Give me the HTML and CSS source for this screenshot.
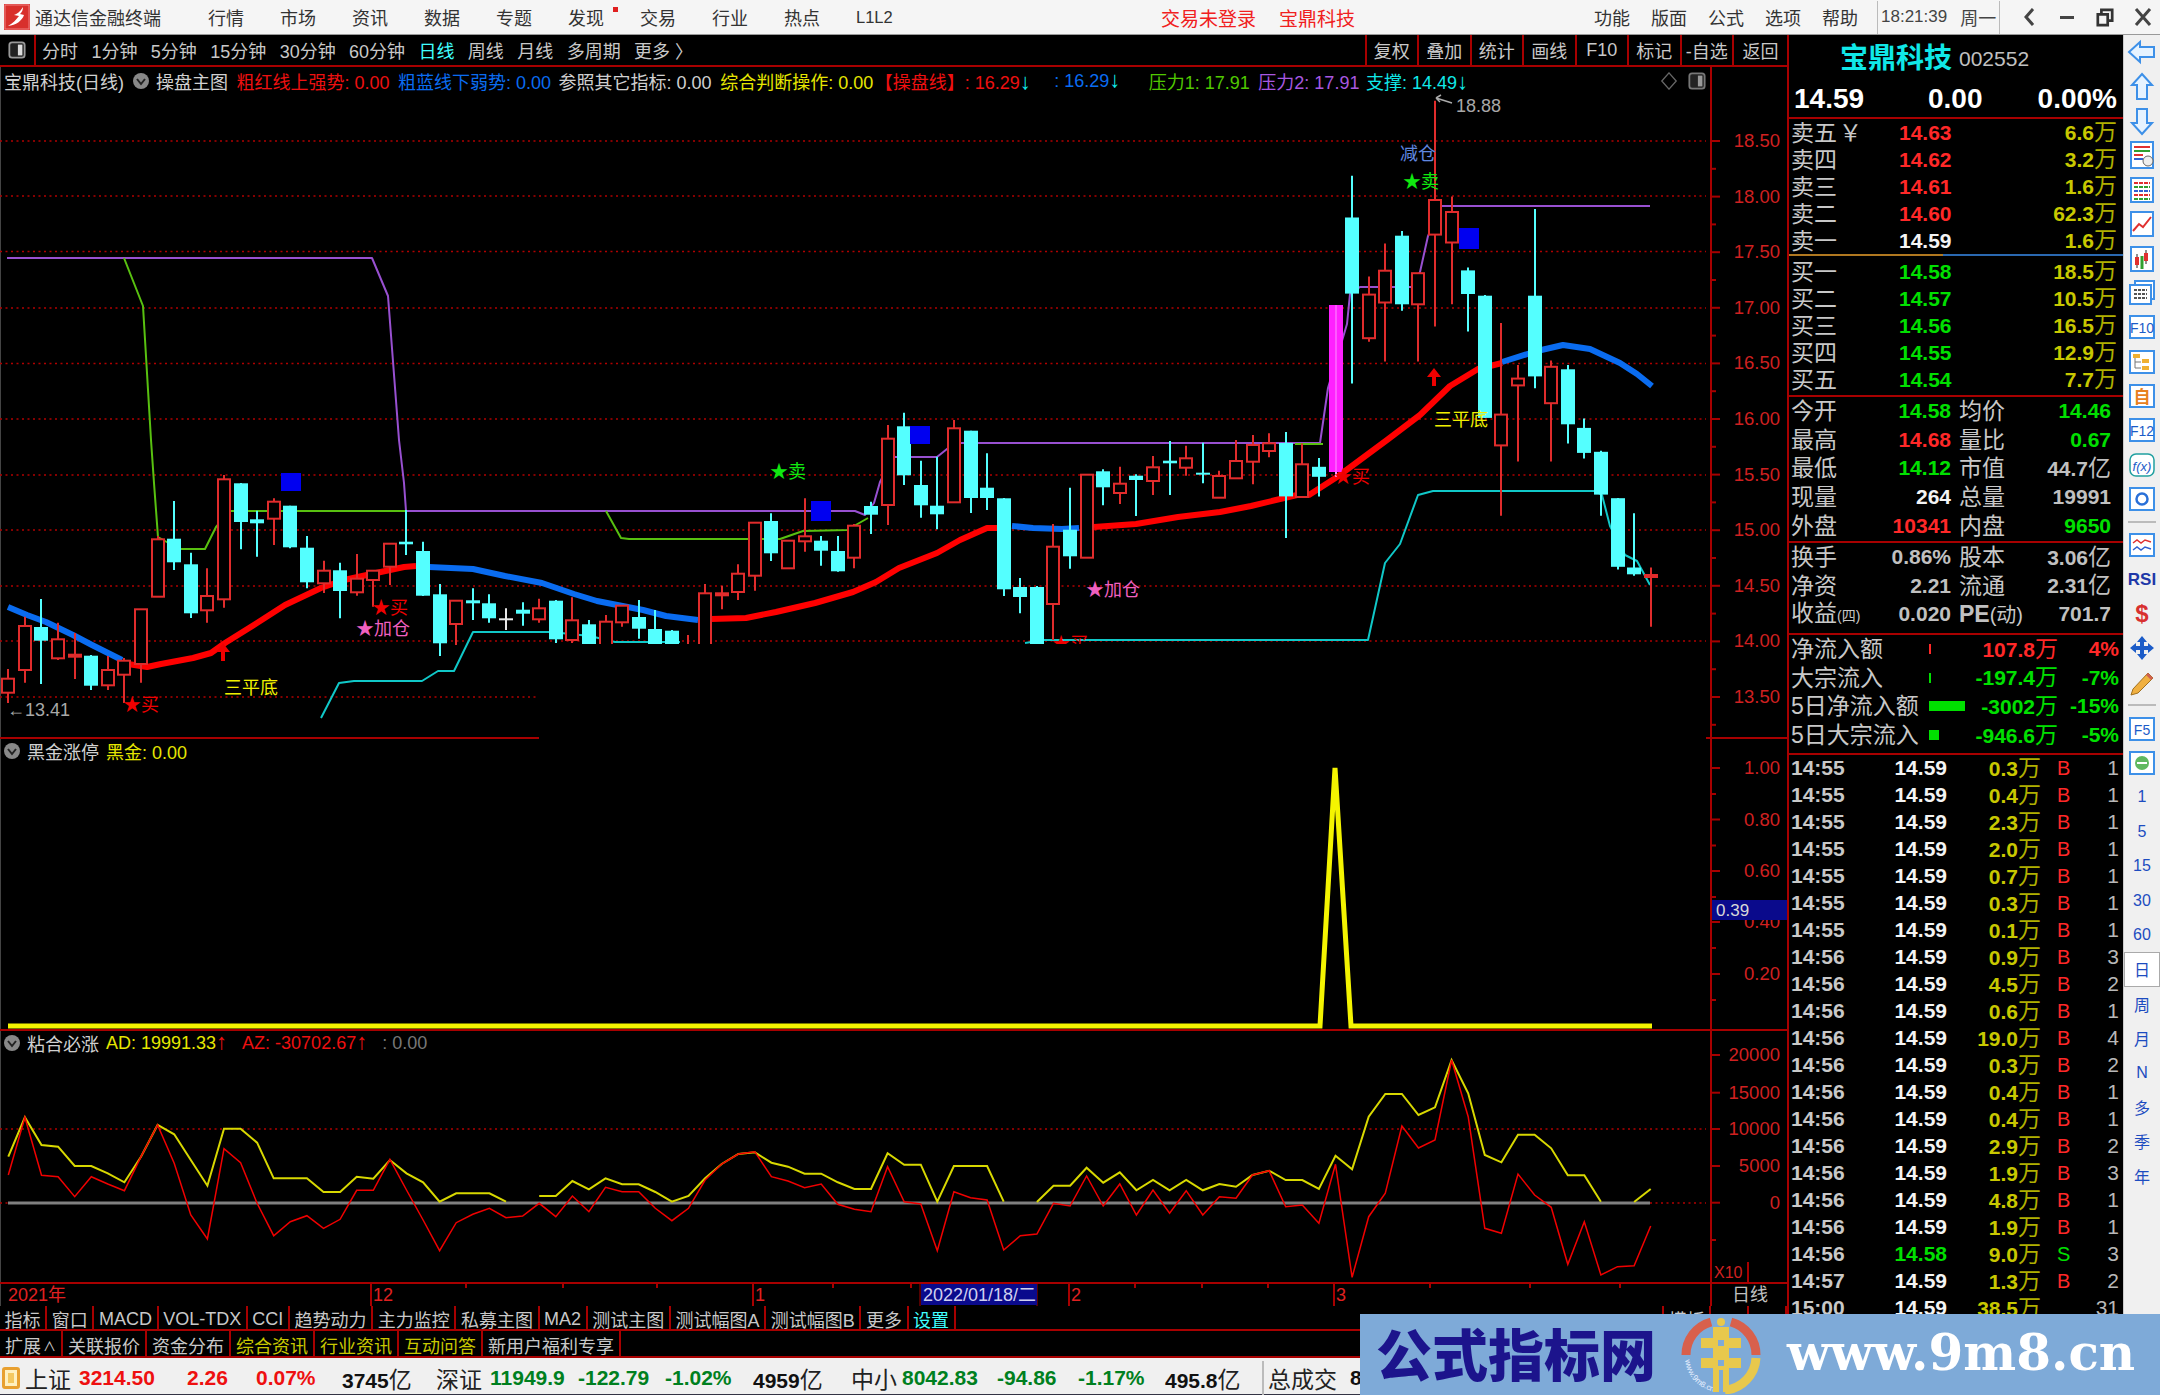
FILE: index.html
```html
<!DOCTYPE html>
<html lang="zh-CN">
<head>
    <meta charset="UTF-8">
    <title>通达信金融终端</title>
    <link rel="stylesheet" href="styles.css">
</head>
<body>

    <!-- Menu bar -->
    <header class="menubar">
        <div class="brand">
            <svg class="brand-logo" viewBox="0 0 26 26">
                <rect width="26" height="26" fill="#d8302c"/>
                <rect x="1" y="1" width="24" height="24" fill="none" stroke="#f08080"/>
                <path d="M19 3 C16 8 13 10 10 11 L15 12 C12 16 9 19 4 22 C12 21 18 17 20 11 L16 10 C18 8 19 6 19 3 Z" fill="#fff"/>
            </svg>
            <span>通达信金融终端</span>
        </div>
        <nav class="nav">
            <span>行情</span><span>市场</span><span>资讯</span><span>数据</span><span>专题</span>
            <span class="has-dot">发现</span><span>交易</span><span>行业</span><span>热点</span><span>L1L2</span>
        </nav>
        <span class="login">交易未登录</span>
        <span class="login login-stock">宝鼎科技</span>
        <nav class="nav-right">
            <span>功能</span><span>版面</span><span>公式</span><span>选项</span><span>帮助</span>
        </nav>
        <div class="clock"><span>18:21:39</span><span class="clock-day">周一</span></div>
        <div class="win-buttons">
            <svg viewBox="0 0 16 22"><path d="M12 3 L5 11 L12 19" fill="none" stroke="#444" stroke-width="3"/></svg>
            <svg viewBox="0 0 16 22"><rect x="1" y="10" width="14" height="3" fill="#444"/></svg>
            <svg viewBox="0 0 20 22"><path d="M2 8 H13 V20 H2 Z M6 8 V3 H18 V15 H13" fill="none" stroke="#333" stroke-width="3"/></svg>
            <svg viewBox="0 0 18 22"><path d="M2 3 L16 19 M16 3 L2 19" fill="none" stroke="#444" stroke-width="3"/></svg>
        </div>
    </header>

    <div class="workspace">

        <!-- Chart column -->
        <main class="chart-col">
            <div class="toolbar">
                <div class="toolbar-icon">
                    <svg viewBox="0 0 20 20"><rect x="1.5" y="1.5" width="17" height="17" rx="3" fill="#222" stroke="#999" stroke-width="2"/><rect x="11" y="4" width="5" height="12" fill="#ddd"/></svg>
                </div>
                <div class="periods">
                    <span>分时</span><span>1分钟</span><span>5分钟</span><span>15分钟</span><span>30分钟</span><span>60分钟</span>
                    <span class="active">日线</span><span>周线</span><span>月线</span><span>多周期</span><span>更多 〉</span>
                </div>
                <div class="tool-cells">
                    <span>复权</span><span>叠加</span><span>统计</span><span>画线</span><span>F10</span><span>标记</span><span>-自选</span><span class="last">返回</span>
                </div>
            </div>

            <div class="charts">
                <svg id="chart" class="chart-svg" viewBox="0 67 1787 1239">
                    <g id="chart-shapes"></g>
                    <!-- chart marks -->
                    <g class="marks">
                        <text class="mk-gray" x="1456" y="112">18.88</text>
                        <path d="M1452 103 L1436 98 M1436 98 L1441 95 M1436 98 L1440 102" stroke="#aaa" fill="none" stroke-width="1.5"/>
                        <text class="mk-gray" x="7" y="716">←13.41</text>
                        <text class="mk-blue" x="1400" y="160">减仓</text>
                        <text class="mk-green" x="1403" y="188">★卖</text>
                        <text class="mk-green" x="770" y="478">★卖</text>
                        <text class="mk-red" x="123" y="711">★买</text>
                        <text class="mk-red" x="372" y="614">★买</text>
                        <text class="mk-red" x="1334" y="483">★买</text>
                        <text class="mk-red" x="1052" y="650">★买</text>
                        <text class="mk-pink" x="356" y="635">★加仓</text>
                        <text class="mk-pink" x="1086" y="596">★加仓</text>
                        <text class="mk-yellow" x="224" y="694">三平底</text>
                        <text class="mk-yellow" x="1434" y="426">三平底</text>
                    </g>
                    <rect x="1050" y="644" width="44" height="14" fill="#000"/>
                    <!-- date axis -->
                    <g class="dates">
                        <rect x="921" y="1284" width="116" height="21" fill="#0a0a8c"/>
                        <text class="date-text" x="8" y="1301">2021年</text>
                        <text class="date-text" x="373" y="1301">12</text>
                        <text class="date-text" x="755" y="1301">1</text>
                        <text class="date-now" x="923" y="1301">2022/01/18/二</text>
                        <text class="date-text" x="1071" y="1301">2</text>
                        <text class="date-text" x="1336" y="1301">3</text>
                        <text class="date-unit" x="1732" y="1301">日线</text>
                    </g>
                </svg>
                <section class="pane pane-main">
                    <div class="pane-head">
                        <span class="c-white">宝鼎科技(日线)</span>
                        <svg class="chevron" viewBox="0 0 16 16"><circle cx="8" cy="8" r="8" fill="#888"/><path d="M4 6 L8 11 L12 6" fill="none" stroke="#222" stroke-width="2"/></svg>
                        <span class="c-white head-name">操盘主图</span>
                        <span class="c-red">粗红线上强势: 0.00</span>
                        <span class="c-blue">粗蓝线下弱势: 0.00</span>
                        <span class="c-white head-refer">参照其它指标: 0.00</span>
                        <span class="c-yellow">综合判断操作: 0.00</span>
                        <span class="c-red head-line">【操盘线】: 16.29<b class="c-cyan">↓</b></span>
                        <span class="c-blue head-colon">: 16.29<b class="c-cyan">↓</b></span>
                        <span class="c-lime head-press">压力1: 17.91</span>
                        <span class="c-purple">压力2: 17.91</span>
                        <span class="c-cyan head-support">支撑: 14.49<b>↓</b></span>
                        <span class="head-icons">
                            <svg viewBox="0 0 18 20"><path d="M9 1 L17 10 L9 19 L1 10 Z" fill="none" stroke="#666" stroke-width="1.5"/></svg>
                            <svg viewBox="0 0 20 20"><rect x="1.5" y="1.5" width="17" height="17" rx="3" fill="#222" stroke="#777" stroke-width="2"/><rect x="11" y="4" width="5" height="12" fill="#999"/></svg>
                        </span>
                    </div>
                </section>
                <section class="pane pane-gold">
                    <div class="pane-head">
                        <svg class="chevron" viewBox="0 0 16 16"><circle cx="8" cy="8" r="8" fill="#888"/><path d="M4 6 L8 11 L12 6" fill="none" stroke="#222" stroke-width="2"/></svg>
                        <span class="c-white">黑金涨停</span>
                        <span class="c-yellow">黑金: 0.00</span>
                    </div>
                </section>
                <section class="pane pane-stick">
                    <div class="pane-head">
                        <svg class="chevron" viewBox="0 0 16 16"><circle cx="8" cy="8" r="8" fill="#888"/><path d="M4 6 L8 11 L12 6" fill="none" stroke="#222" stroke-width="2"/></svg>
                        <span class="c-white">粘合必涨</span>
                        <span class="c-yellow">AD: 19991.33<b class="c-red">↑</b></span>
                        <span class="c-red head-az">AZ: -30702.67<b>↑</b></span>
                        <span class="c-gray head-az">: 0.00</span>
                    </div>
                </section>
            </div>

            <!-- Indicator tabs -->
            <div class="tabs tabs-top">
                <span>指标</span><span>窗口</span><span>MACD</span><span>VOL-TDX</span><span>CCI</span><span>趋势动力</span><span>主力监控</span><span>私募主图</span><span>MA2</span><span>测试主图</span><span>测试幅图A</span><span>测试幅图B</span><span>更多</span><span class="active">设置</span>
                <span class="tab-end">模板</span><span class="tab-small">+</span><span class="tab-small"> </span>
            </div>
            <div class="tabs tabs-bottom">
                <span>扩展<small>∧</small></span><span>关联报价</span><span>资金分布</span><span class="gold">综合资讯</span><span class="gold">行业资讯</span><span class="gold">互动问答</span><span>新用户福利专享</span>
            </div>
        </main>

        <!-- Quote panel -->
        <aside class="quote">
            <div class="quote-title">
                <span class="quote-name">宝鼎科技</span><span class="quote-code">002552</span>
            </div>
            <div class="quote-price">
                <span>14.59</span><span>0.00</span><span>0.00%</span>
            </div>

            <div class="book book-ask">
                <div class="book-row"><span class="lbl">卖五<i class="yen">￥</i></span><b class="red">14.63</b><b class="vol">6.6<u>万</u></b></div>
                <div class="book-row"><span class="lbl">卖四</span><b class="red">14.62</b><b class="vol">3.2<u>万</u></b></div>
                <div class="book-row"><span class="lbl">卖三</span><b class="red">14.61</b><b class="vol">1.6<u>万</u></b></div>
                <div class="book-row"><span class="lbl">卖二</span><b class="red">14.60</b><b class="vol">62.3<u>万</u></b></div>
                <div class="book-row"><span class="lbl">卖一</span><b class="white">14.59</b><b class="vol">1.6<u>万</u></b></div>
            </div>
            <div class="book-split"></div>
            <div class="book book-bid">
                <div class="book-row"><span class="lbl">买一</span><b class="green">14.58</b><b class="vol">18.5<u>万</u></b></div>
                <div class="book-row"><span class="lbl">买二</span><b class="green">14.57</b><b class="vol">10.5<u>万</u></b></div>
                <div class="book-row"><span class="lbl">买三</span><b class="green">14.56</b><b class="vol">16.5<u>万</u></b></div>
                <div class="book-row"><span class="lbl">买四</span><b class="green">14.55</b><b class="vol">12.9<u>万</u></b></div>
                <div class="book-row"><span class="lbl">买五</span><b class="green">14.54</b><b class="vol">7.7<u>万</u></b></div>
            </div>

            <div class="stats stats-day">
                <div class="stat-row"><span class="lbl">今开</span><b class="green">14.58</b><span class="lbl">均价</span><b class="green">14.46</b></div>
                <div class="stat-row"><span class="lbl">最高</span><b class="red">14.68</b><span class="lbl">量比</span><b class="green">0.67</b></div>
                <div class="stat-row"><span class="lbl">最低</span><b class="green">14.12</b><span class="lbl">市值</span><b class="gray">44.7<u>亿</u></b></div>
                <div class="stat-row"><span class="lbl">现量</span><b class="white">264</b><span class="lbl">总量</span><b class="gray">19991</b></div>
                <div class="stat-row"><span class="lbl">外盘</span><b class="red">10341</b><span class="lbl">内盘</span><b class="green">9650</b></div>
            </div>
            <div class="stats stats-base">
                <div class="stat-row"><span class="lbl">换手</span><b class="gray">0.86%</b><span class="lbl">股本</span><b class="gray">3.06<u>亿</u></b></div>
                <div class="stat-row"><span class="lbl">净资</span><b class="gray">2.21</b><span class="lbl">流通</span><b class="gray">2.31<u>亿</u></b></div>
                <div class="stat-row"><span class="lbl">收益<small>(四)</small></span><b class="gray">0.020</b><span class="lbl"><b class="gray">PE</b><small class="pe">(动)</small></span><b class="gray">701.7</b></div>
            </div>
            <div class="stats stats-flow">
                <div class="flow-row"><span class="lbl">净流入额</span><i class="bar bar-red" style="width:2px"></i><b class="red">107.8<u>万</u></b><b class="red">4%</b></div>
                <div class="flow-row"><span class="lbl">大宗流入</span><i class="bar bar-green" style="width:2px"></i><b class="green">-197.4<u>万</u></b><b class="green">-7%</b></div>
                <div class="flow-row"><span class="lbl">5日净流入额</span><i class="bar bar-green" style="width:36px"></i><b class="green">-3002<u>万</u></b><b class="green">-15%</b></div>
                <div class="flow-row"><span class="lbl">5日大宗流入</span><i class="bar bar-green" style="width:10px"></i><b class="green">-946.6<u>万</u></b><b class="green">-5%</b></div>
            </div>
            <div id="ticks" class="ticks"></div>
        </aside>

        <!-- Right icon strip -->
        <div class="side">
            <div class="side-btn"><svg viewBox="0 0 30 30"><path d="M2 15 L13 5 V10 H27 V20 H13 V25 Z" class="ic-arrow"/></svg></div>
            <div class="side-btn"><svg viewBox="0 0 30 30"><path d="M15 2 L25 13 H20 V27 H10 V13 H5 Z" class="ic-arrow"/></svg></div>
            <div class="side-btn"><svg viewBox="0 0 30 30"><path d="M15 28 L25 17 H20 V3 H10 V17 H5 Z" class="ic-arrow"/></svg></div>
            <div class="side-btn"><svg viewBox="0 0 30 30"><rect x="4" y="2" width="22" height="26" class="ic-box"/><path d="M7 7 H23" stroke="#e03030" stroke-width="2"/><path d="M7 11 H23" stroke="#30a030" stroke-width="2"/><path d="M7 15 H16" stroke="#e03030" stroke-width="2"/><path d="M7 19 H16" stroke="#3060d0" stroke-width="2"/><circle cx="21" cy="21" r="5" fill="#eee" stroke="#666"/></svg></div>
            <div class="side-btn"><svg viewBox="0 0 30 30"><rect x="4" y="3" width="22" height="24" class="ic-box"/><path d="M7 8 H23" stroke="#e03030" stroke-width="2" stroke-dasharray="4 1"/><path d="M7 12 H23" stroke="#30a030" stroke-width="2" stroke-dasharray="4 1"/><path d="M7 16 H23" stroke="#3060d0" stroke-width="2" stroke-dasharray="4 1"/><path d="M7 20 H23" stroke="#e03030" stroke-width="2" stroke-dasharray="4 1"/><path d="M7 24 H23" stroke="#30a030" stroke-width="2" stroke-dasharray="4 1"/></svg></div>
            <div class="side-btn"><svg viewBox="0 0 30 30"><rect x="4" y="3" width="22" height="24" class="ic-box"/><path d="M6 22 L12 15 L16 18 L24 8" fill="none" stroke="#e03030" stroke-width="2"/></svg></div>
            <div class="side-btn"><svg viewBox="0 0 30 30"><rect x="4" y="3" width="22" height="24" class="ic-box"/><path d="M10 10 V24 M19 6 V20" stroke="#222"/><rect x="8" y="13" width="4" height="8" fill="#e03030"/><rect x="17" y="9" width="4" height="8" fill="#e03030"/><path d="M15 12 V25" stroke="#30a030" stroke-width="3"/></svg></div>
            <div class="side-btn"><svg viewBox="0 0 30 30"><rect x="8" y="3" width="19" height="18" class="ic-box"/><rect x="3" y="7" width="21" height="19" class="ic-box"/><path d="M7 12 H20 M7 16 H20 M7 20 H20" stroke="#555" stroke-width="2" stroke-dasharray="3 1"/></svg></div>
            <div class="side-btn side-label"><svg viewBox="0 0 30 30"><rect x="3" y="4" width="24" height="22" class="ic-box"/><text x="15" y="21" class="ic-text">F10</text></svg></div>
            <div class="side-btn"><svg viewBox="0 0 30 30"><rect x="3" y="4" width="24" height="22" class="ic-box"/><path d="M8 9 V21 H14 M8 15 H14" fill="none" stroke="#777"/><rect x="6" y="7" width="7" height="4" fill="#f0b030"/><rect x="15" y="12" width="7" height="4" fill="#f0b030"/><rect x="15" y="19" width="7" height="4" fill="#f0b030"/></svg></div>
            <div class="side-btn"><svg viewBox="0 0 30 30"><rect x="3" y="4" width="24" height="22" class="ic-box"/><text x="15" y="22" class="ic-text ic-orange">自</text></svg></div>
            <div class="side-btn"><svg viewBox="0 0 30 30"><rect x="3" y="4" width="24" height="22" class="ic-box"/><text x="15" y="21" class="ic-text">F12</text></svg></div>
            <div class="side-btn"><svg viewBox="0 0 30 30"><rect x="3" y="4" width="24" height="22" rx="6" fill="#fff" stroke="#20a0a0" stroke-width="1.5"/><text x="15" y="21" class="ic-text ic-fx">f(x)</text></svg></div>
            <div class="side-btn"><svg viewBox="0 0 30 30"><rect x="3" y="4" width="24" height="22" class="ic-box"/><circle cx="15" cy="15" r="5.5" fill="none" stroke="#2a70d8" stroke-width="2.5"/></svg></div>
            <div class="side-sep"></div>
            <div class="side-btn"><svg viewBox="0 0 30 30"><rect x="3" y="4" width="24" height="22" class="ic-box"/><path d="M6 13 L10 10 L14 13 L18 10 L24 12" fill="none" stroke="#e03030" stroke-width="1.5"/><path d="M6 20 L10 17 L14 20 L18 17 L24 19" fill="none" stroke="#3060d0" stroke-width="1.5"/></svg></div>
            <div class="side-btn"><span class="side-rsi">RSI</span></div>
            <div class="side-btn"><span class="side-dollar">$</span></div>
            <div class="side-btn"><svg viewBox="0 0 30 30"><path d="M15 3 L20 9 H17 V13 H21 V10 L27 15 L21 20 V17 H17 V21 H20 L15 27 L10 21 H13 V17 H9 V20 L3 15 L9 10 V13 H13 V9 H10 Z" fill="#1c5cc8"/></svg></div>
            <div class="side-btn"><svg viewBox="0 0 30 30"><path d="M6 21 L21 5 L26 10 L11 25 L4 27 Z" fill="#f0b040" stroke="#a07020"/><path d="M21 5 L26 10 L24 12 L19 7 Z" fill="#d06050"/></svg></div>
            <div class="side-sep"></div>
            <div class="side-btn"><svg viewBox="0 0 30 30"><rect x="3" y="4" width="24" height="22" class="ic-box"/><text x="15" y="21" class="ic-text">F5</text></svg></div>
            <div class="side-btn"><svg viewBox="0 0 30 30"><rect x="3" y="4" width="24" height="22" class="ic-box"/><circle cx="15" cy="15" r="7" fill="#60b860"/><path d="M10 15 H20" stroke="#fff" stroke-width="2"/></svg></div>
            <div class="side-btn side-text">1</div>
            <div class="side-btn side-text">5</div>
            <div class="side-btn side-text">15</div>
            <div class="side-btn side-text">30</div>
            <div class="side-btn side-text">60</div>
            <div class="side-btn side-text side-active">日</div>
            <div class="side-btn side-text">周</div>
            <div class="side-btn side-text">月</div>
            <div class="side-btn side-text">N</div>
            <div class="side-btn side-text">多</div>
            <div class="side-btn side-text">季</div>
            <div class="side-btn side-text">年</div>
        </div>
    </div>

    <!-- Index ticker -->
    <footer class="status">
        <span class="status-icon"></span>
        <span class="st-name">上证</span><span class="st-up">3214.50</span><span class="st-up">2.26</span><span class="st-up">0.07%</span><span class="st-amt">3745<u>亿</u></span>
        <span class="st-name">深证</span><span class="st-down">11949.9</span><span class="st-down">-122.79</span><span class="st-down">-1.02%</span><span class="st-amt">4959<u>亿</u></span>
        <span class="st-name">中小</span><span class="st-down">8042.83</span><span class="st-down">-94.86</span><span class="st-down">-1.17%</span><span class="st-amt">495.8<u>亿</u></span>
        <span class="st-name st-total">总成交</span><span class="st-amt">8</span>
    </footer>

    <!-- Site watermark over the bottom right corner -->
    <div class="watermark">
        <span class="wm-title">公式指标网</span>
        <svg class="wm-logo" viewBox="0 0 80 78">
            <path d="M5 39 A34 34 0 0 1 30 6" fill="none" stroke="#d8604c" stroke-width="9"/>
            <path d="M50 6 A34 34 0 0 1 75 39" fill="none" stroke="#d8604c" stroke-width="9"/>
            <path d="M75 42 A34 34 0 0 1 44 74" fill="none" stroke="#e8c84c" stroke-width="9"/>
            <path id="wm-arc" d="M4 44 A36 36 0 0 0 36 76" fill="none"/>
            <text class="wm-arc-text"><textPath href="#wm-arc">www.9m8.cn</textPath></text>
            <circle cx="40" cy="6" r="4" fill="#e8c84c"/>
            <path d="M32 11 H48 V22 H60 V32 H48 V42 H60 V52 H48 V76 H42 V54 H38 V76 H32 V52 H20 V42 H32 V32 H20 V22 H32 Z" fill="#e8c84c"/>
            <path d="M37 24 H43 V30 H37 Z M37 44 H43 V50 H37 Z" fill="#7eaad8"/>
        </svg>
        <span class="wm-url">www.9m8.cn</span>
    </div>

    <script src="chart.js"></script>
</body>
</html>
```

FILE: styles.css
```css
* {
    box-sizing: border-box;
}

body {
    margin: 0;
    width: 2160px;
    height: 1395px;
    overflow: hidden;
    position: relative;
    background-color: #000;
    color: #c8c8c8;
    font-family: "Liberation Sans", "Noto Sans CJK SC", sans-serif;
    font-size: 18px;
    display: flex;
    flex-direction: column;
}

u {
    text-decoration: none;
    font-weight: 400;
}

/* ---- menu bar ---- */
.menubar {
    height: 35px;
    flex: none;
    display: flex;
    align-items: center;
    background-color: #f5f5f5;
    border-bottom: 1px solid #999;
    color: #333;
}

.brand {
    width: 208px;
    flex: none;
    display: flex;
    align-items: center;
    gap: 5px;
    padding-left: 4px;
}

.brand-logo {
    width: 26px;
    height: 26px;
}

.nav {
    display: flex;
    align-items: center;
    width: 720px;
    flex: none;
}

.nav span {
    width: 72px;
    position: relative;
}

.nav span:last-child {
    font-size: 16.5px;
}

.has-dot::after {
    content: "";
    position: absolute;
    left: 45px;
    top: 3px;
    width: 5px;
    height: 5px;
    background-color: #e02020;
}

.login {
    color: #f02020;
    font-size: 19px;
    margin-left: 233px;
}

.login-stock {
    margin-left: 23px;
}

.nav-right {
    display: flex;
    margin-left: 239px;
}

.nav-right span {
    width: 57px;
}

.clock {
    display: flex;
    align-items: center;
    gap: 13px;
    height: 33px;
    border-left: 1px solid #bbb;
    border-right: 1px solid #bbb;
    padding: 0 3px;
    margin-left: -2px;
    font-size: 17px;
    color: #444;
}

.clock-day {
    font-size: 18px;
}

.win-buttons {
    display: flex;
    align-items: center;
    gap: 20px;
    padding-left: 20px;
}

.win-buttons svg {
    height: 22px;
    width: 18px;
}

/* ---- main area ---- */
.workspace {
    height: 1323px;
    flex: none;
    display: flex;
}

.chart-col {
    width: 1787px;
    flex: none;
    display: flex;
    flex-direction: column;
}

.toolbar {
    height: 32px;
    flex: none;
    display: flex;
    border-bottom: 2px solid #a80000;
}

.toolbar-icon {
    width: 36px;
    padding: 6px 0 0 8px;
    border-right: 2px solid #a80000;
}

.toolbar-icon svg {
    width: 18px;
    height: 18px;
    display: block;
}

.periods {
    display: flex;
    align-items: center;
    gap: 13.4px;
    padding-left: 6px;
}

.periods .active {
    color: #40ffff;
}

.tool-cells {
    display: flex;
    margin-left: auto;
}

.tool-cells span {
    width: 52.5px;
    border-left: 2px solid #a80000;
    display: flex;
    align-items: center;
    justify-content: center;
}

.tool-cells .last {
    width: 55px;
}

/* ---- chart panes ---- */
.charts {
    height: 1239px;
    flex: none;
    position: relative;
    border-left: 1px solid #444;
}

.chart-svg {
    position: absolute;
    left: -1px;
    top: 0;
    width: 1787px;
    height: 1239px;
}

.pane {
    position: relative;
}

.pane-main {
    height: 671px;
}

.pane-gold {
    height: 292px;
}

.pane-stick {
    height: 252px;
}

.pane-head {
    display: flex;
    align-items: center;
    gap: 8.5px;
    height: 28px;
    padding-left: 3px;
    white-space: nowrap;
}

.pane-gold .pane-head,
.pane-stick .pane-head {
    height: 25px;
    gap: 7px;
}

.pane-stick .pane-head {
    height: 26px;
}

.pane-head b {
    font-weight: 400;
    font-size: 22px;
    line-height: 18px;
}

.chevron {
    width: 16px;
    height: 16px;
    flex: none;
}

.head-name {
    margin-left: -1px;
}

.head-refer {
    margin-left: -1px;
}

.head-line {
    margin-left: -7px;
}

.head-colon {
    margin-left: 15px;
}

.head-press {
    margin-left: 20px;
}

.head-support {
    margin-left: -2px;
}

.head-az {
    margin-left: 8px;
}

.head-icons {
    position: absolute;
    left: 1659px;
    top: 5px;
    display: flex;
    gap: 10px;
}

.head-icons svg {
    width: 18px;
    height: 18px;
}

.c-white { color: #d0d0d0; }
.c-red { color: #ee1010; }
.c-blue { color: #0a6cf0; }
.c-yellow { color: #e6e600; }
.c-cyan { color: #10e8e8; }
.c-lime { color: #50c800; }
.c-purple { color: #a858e0; }
.c-gray { color: #777; }

.marks text {
    font-size: 18px;
}

.mk-gray { fill: #a8a8a8; }
.mk-blue { fill: #6088e0; }
.mk-green { fill: #10e810; }
.mk-red { fill: #f00000; }
.mk-pink { fill: #f060c0; }
.mk-yellow { fill: #f0f000; }

.axis-label {
    fill: #d02020;
    font-size: 18.5px;
    text-anchor: end;
}

.axis-box-text {
    fill: #d8d8d8;
    font-size: 17px;
}

.axis-x10 {
    fill: #d02020;
    font-size: 16px;
}

.date-text {
    fill: #e02020;
    font-size: 18px;
}

.date-now {
    fill: #d0d0f0;
    font-size: 18px;
}

.date-unit {
    fill: #c0c0c0;
    font-size: 18px;
}

/* ---- tabs ---- */
.tabs {
    display: flex;
    flex: none;
    border-bottom: 2px solid #a80000;
}

.tabs-top {
    height: 25px;
}

.tabs-bottom {
    height: 27px;
}

.tabs span {
    display: flex;
    align-items: center;
    padding: 3px 4.6px 0;
    border-right: 2px solid #a80000;
    white-space: pre;
}

.tabs-bottom span {
    padding: 3px 5px 0;
}

.tabs small {
    font-size: 13px;
    margin-left: 2px;
}

.tabs .active {
    color: #40ffff;
}

.tabs .gold {
    color: #c8c800;
}

.tabs .tab-end {
    margin-left: auto;
    border-left: 2px solid #a80000;
}

.tabs .tab-small {
    width: 38px;
}

/* ---- quote panel ---- */
.quote {
    width: 336px;
    flex: none;
    border-left: 2px solid #a80000;
    font-size: 21px;
    overflow: hidden;
}

.quote-title {
    height: 45px;
    display: flex;
    align-items: center;
    padding: 0 0 4px 51px;
    gap: 7px;
}

.quote-name {
    font-size: 28px;
    font-weight: 700;
    color: #10e8e8;
}

.quote-code {
    font-size: 21px;
    color: #c0c0c0;
    margin-top: 6px;
}

.quote-price {
    height: 39px;
    display: grid;
    grid-template-columns: 134px 50px 139px;
    align-items: center;
    padding: 0 6px 0 5px;
    border-bottom: 2px solid #a80000;
    font-size: 28px;
    font-weight: 700;
    color: #fff;
}

.quote-price span:nth-child(n+2) {
    text-align: right;
}

.lbl {
    font-size: 23px;
    font-weight: 400;
    color: #c8c8c8;
    white-space: nowrap;
}

.lbl small {
    font-size: 14px;
}

.lbl small.pe {
    font-size: 20px;
}

.yen {
    font-style: normal;
    margin-left: 2px;
}

.book {
    padding-left: 2px;
}

.book-bid {
    padding-top: 2px;
    padding-bottom: 2px;
}

/* fixed line height keeps the tall CJK line box from growing the grid track */
.book-row,
.stat-row,
.flow-row,
.tick {
    line-height: 24px;
}

.book-row {
    height: 27px;
    display: grid;
    grid-template-columns: 108px 52px 166px;
    align-items: center;
    white-space: nowrap;
}

.book-row b,
.stat-row b,
.flow-row b {
    text-align: right;
}

.red { color: #ff2828; }
.green { color: #00e000; }
.white { color: #f4f4f4; }
.gray { color: #c0c0c0; }
.vol { color: #c8c800; }
.vol u { color: #b0b000; font-size: 23px; }
.gray u { font-size: 23px; }

.book-split {
    height: 2px;
    background: linear-gradient(to right, #b07820 154px, #2a68b0 154px);
}

.stats {
    border-top: 2px solid #a80000;
    padding-left: 2px;
}

.stats-day {
    padding-bottom: 1px;
}

.stats-base {
    padding-bottom: 4.2px;
}

.stats-flow {
    padding-bottom: 3.6px;
}

.stat-row {
    height: 28.6px;
    display: grid;
    grid-template-columns: 70px 90px 70px 90px;
    column-gap: 0;
    align-items: center;
    white-space: nowrap;
}

.stat-row .lbl:nth-child(3) {
    margin-left: 8px;
}

.flow-row {
    height: 28.6px;
    display: grid;
    grid-template-columns: 138px 36px 93px 61px;
    align-items: center;
    white-space: nowrap;
}

.flow-row u {
    font-size: 23px;
}

.bar {
    height: 10px;
    display: block;
}

.bar-red { background-color: #ff2828; }
.bar-green { background-color: #00e000; }

.ticks {
    border-top: 2px solid #a80000;
    padding-left: 2px;
}

.tick {
    height: 27px;
    display: grid;
    grid-template-columns: 60px 96px 94px 16px 62px;
    align-items: center;
    white-space: nowrap;
}

.tick b {
    text-align: right;
}

.tick-time { color: #c8c8c8; font-weight: 700; }
.tick-price { color: #f4f4f4; }
.tick-vol { color: #c8c800; }
.tick-vol u { color: #b0b000; font-size: 23px; }
.tick-buy { color: #ff2828; }
.tick-sell { color: #00e000; }
.tick-count { color: #b8b8b8; font-weight: 400; }

.tick b.tick-side {
    font-size: 20px;
    font-weight: 400;
    padding-left: 16px;
    text-align: left;
}

/* ---- icon strip ---- */
.side {
    width: 37px;
    flex: none;
    background-color: #f0f0f0;
    border-left: 1px solid #ccc;
    height: 1360px;
}

.side-btn {
    height: 34.4px;
    display: flex;
    align-items: center;
    justify-content: center;
}

.side-btn svg {
    width: 30px;
    height: 30px;
}

.side-sep {
    height: 11.5px;
    margin: 0 4px;
    border-bottom: 2px solid #bbb;
    transform: translateY(-5px);
}

.ic-arrow {
    fill: #e6f3ff;
    stroke: #3d90e8;
    stroke-width: 2;
}

.ic-box {
    fill: #fff;
    stroke: #3d90e8;
    stroke-width: 2;
}

.ic-text {
    fill: #1c5cc8;
    font-size: 14px;
    text-anchor: middle;
}

.ic-orange {
    fill: #e88020;
    font-size: 17px;
    font-weight: 700;
}

.ic-fx {
    font-style: italic;
    font-size: 13px;
}

.side-rsi {
    color: #2038a8;
    font-size: 17px;
    font-weight: 700;
}

.side-dollar {
    color: #d83030;
    font-size: 24px;
    font-weight: 700;
}

.side-text {
    color: #1c4cc0;
    font-size: 16px;
}

.side-active {
    background-color: #fff;
    border: 1px solid #aaa;
}

/* ---- index ticker ---- */
.status {
    height: 37px;
    flex: none;
    padding-top: 3px;
    display: grid;
    grid-template-columns: 25px 54px 108px 69px 86px 94px 54px 88px 87px 88px 98px 51px 95px 81px 87px 101px 84px 100px;
    align-items: center;
    background-color: #f0f0f0;
    border-bottom: 1px solid #334;
    font-size: 21px;
    font-weight: 700;
    white-space: nowrap;
    position: relative;
    z-index: 1;
}

.status-icon {
    width: 18px;
    height: 22px;
    margin-left: 2px;
    background-color: #f4c860;
    border: 3px solid #e8a030;
    border-radius: 3px;
    box-shadow: inset 0 0 0 3px #fff0c0;
}

.st-name {
    font-size: 23px;
    font-weight: 400;
    color: #222;
}

.st-up { color: #ee1010; }
.st-down { color: #008020; }
.st-amt { color: #111; }
.st-amt u { font-size: 23px; color: #222; }

.st-total {
    border-left: 2px solid #bbb;
    padding-left: 4px;
    margin-left: -4px;
}

/* ---- watermark ---- */
.watermark {
    position: absolute;
    left: 1360px;
    top: 1314px;
    width: 800px;
    height: 81px;
    z-index: 2;
    background-color: #7eaad8;
    display: flex;
    align-items: center;
    padding-left: 16px;
    white-space: nowrap;
}

.wm-title {
    font-family: "Noto Sans CJK SC", sans-serif;
    font-size: 56px;
    font-weight: 900;
    color: #1c148c;
    width: 305px;
    flex: none;
    margin-top: -6px;
}

.wm-logo {
    width: 80px;
    height: 78px;
    flex: none;
}

.wm-arc-text {
    font-size: 8px;
    fill: #e8f0ff;
}

.wm-url {
    font-family: "DejaVu Serif", serif;
    font-size: 50px;
    font-weight: 700;
    color: #fff;
    margin-left: 26px;
    margin-top: -4px;
}
```

FILE: chart.js
```js
const RED_LINE = '#a80000';

// candles: top of wick, top of body, bottom of body, bottom of wick, kind (pixels)
const candles = [
    [669,678.7,692.7,703,'r'],[616.7,626,670,682.7,'r'],[599,627,640.7,684,'c'],[622.7,639.3,658.3,660,'r'],
    [633,654.7,656.7,679,'r'],[655,655.7,685.7,690,'c'],[656,670,685.3,690,'r'],[658,660.7,674.7,703,'r'],
    [609,609.3,664,682.7,'r'],[536,539.3,596.7,597,'r'],[501,538.7,562.3,570,'c'],[552.7,564.3,613.3,618,'c'],
    [568.3,596,610.3,622.7,'r'],[475,479.3,599.3,607.7,'r'],[483,483.3,522,549.3,'c'],[510.7,519.3,523.3,556.7,'c'],
    [498.3,501.7,518.7,545,'r'],[505.7,505.7,547.3,548.3,'c'],[536,547.7,582.3,588.3,'c'],[560.7,570.7,583.3,593,'r'],
    [562.7,570.3,591,618.3,'c'],[554,578.7,592.3,595.7,'r'],[570,570.7,580,606.7,'r'],[543.3,543.7,566.7,585,'r'],
    [510,541.7,544.3,555,'c'],[541.7,551,595.7,596,'c'],[584,594.3,643.3,656,'c'],[600.7,600.7,624,645,'r'],
    [588.3,600.3,603.3,620,'c'],[594.3,603.3,618.3,622.7,'c'],[608.3,618.3,619.7,630,'w'],[602.3,609.7,613.7,625.7,'c'],
    [598.7,608.3,619.3,622.7,'r'],[600,600.7,639.3,643,'c'],[597.3,620.3,640,643,'r'],[620,624.3,646,646,'c'],
    [615,621.7,646,646,'r'],[605,605.7,622.3,626.7,'r'],[600,617,628.7,638.7,'c'],[610,629,646,646,'c'],
    [630,630.7,646,646,'c'],[635,646,646,646,'r'],[584,593.3,646,646,'r'],[585.7,593.3,595.3,609.3,'r'],
    [564.3,573.7,592,600,'r'],[522.7,522.7,575.7,590.7,'r'],[513.3,521,553.3,561,'c'],[540,540.7,568.3,568.3,'r'],
    [498.3,536.3,541.3,551.7,'r'],[536,540.7,550.7,565.7,'c'],[536,551,571.3,571.7,'c'],[524,525.7,557.7,568.3,'r'],
    [501.7,506,514.7,534,'c'],[425,438.7,505,525,'r'],[412.7,426.3,475.3,485,'c'],[460.7,485,505.3,517.7,'c'],
    [456.7,505.7,514.3,529.3,'c'],[420,428.3,502.3,502.3,'r'],[430.7,430.7,498,513,'c'],[453.3,487.7,498,510,'c'],
    [498,498.3,589.3,596,'c'],[578,587,597,613.3,'c'],[586,587,646,646,'c'],[524,546.7,604,640,'r'],
    [487.7,529.7,556.3,568.7,'c'],[474.7,474.7,557.7,557.7,'r'],[469.3,471.3,487.3,505.3,'c'],[466.7,483.7,493,504,'r'],
    [474.3,475.7,480,516,'c'],[456,467.3,481,495,'r'],[441,460.7,463.3,495,'c'],[445.7,458.3,467.7,475.7,'r'],
    [442.7,472.7,474.3,483.3,'c'],[470.7,476,497.7,497.7,'r'],[440,461,478.3,478.3,'r'],[435,445,461.7,484.3,'r'],
    [433.3,443.3,451,457.3,'r'],[432,443,496.4,538,'c'],[443.6,464.3,497,497,'r'],[457.9,466.8,476.8,496.4,'c'],
    [305,305,472,476.8,'m'],[175.7,217.5,293.6,383.6,'c'],[276.4,294.6,338.2,341.8,'r'],[243.6,270.7,302.5,361.4,'r'],
    [231,235.7,304.3,310.7,'c'],[273,273.2,304.3,361.4,'r'],[100.7,200,234.6,326.4,'r'],[196.4,212,242.5,304.3,'r'],
    [267.5,270.4,294,331.4,'c'],[295,295.7,417.9,418,'c'],[322.9,414.6,445.4,515.7,'r'],[365,378.6,385.4,461.4,'r'],
    [208.9,295.7,376.4,388.2,'c'],[360.4,366.8,403.2,461.4,'r'],[365,369.3,424.3,443.6,'c'],[418.6,427.9,452.9,458.6,'c'],
    [450.7,451.8,494.6,515.7,'c'],[498,498.2,566.8,569.6,'c'],[513.2,567.5,574.3,575.7,'c'],[567.5,575,577,626.8,'r']
];

// thick moving average, red while rising and blue while falling
const maSegments = [
    ['#0a6cf0', '8,607 27,615 46,622 73,635 92,645 122,660'],
    ['#ff0000', '128,664 147,667 161,664 193,658 211,653 225,643 257,623 285,605 321,588 344,580 376,573 404,567 416,566'],
    ['#0a6cf0', '429,567 473,569 505,576 542,583 574,594 597,601 643,610 666,616 698,620'],
    ['#ff0000', '711,619 746,618 776,612 815,603 853,592 876,582 899,568 937,553 960,540 987,528 997,528'],
    ['#0a6cf0', '1012,526 1033,528 1062,529 1079,528'],
    ['#ff0000', '1094,527 1136,524 1178,517 1220,512 1251,506 1297,495 1309,495 1337,477 1387,440 1420,415 1450,386 1478,369 1502,363'],
    ['#0a6cf0', '1502,362 1537,351 1563,345 1590,349 1620,363 1637,374 1652,386']
];

// thin pressure and support lines
const thinLines = [
    ['#9850d0', '7,258 372,258 388,296 399,440 404,483 406,511 855,511 865,515 874,503 880,482 893,457 937,457 947,449 960,443 1320,443 1328,388 1347,324 1350,294 1360,287 1412,287 1420,272 1428,236 1440,206 1650,206'],
    ['#58c010', '124,258 143,306 151,440 154,483 158,537 179,549 205,549 216,527 230,511 405,511'],
    ['#58c010', '606,511 621,538 629,539 780,539 803,531 847,530 868,518'],
    ['#58c010', '1295,444 1323,444'],
    ['#10c8c8', '321,718 339,683 354,681 422,681 438,671 454,671 473,632 551,632 590,636 615,642 660,642 680,642'],
    ['#10c8c8', '1025,643 1044,640 1368,640 1385,563 1400,544 1418,495 1433,491 1595,491 1602,495 1610,526 1625,555 1637,561 1650,585']
];

// indicator values per candle index, pixels, null where the line is cut at zero
const adLine = [1156.7,1117.3,1145,1146.7,1166,1166,1173.3,1182.3,1156.7,1125,1134.3,1160,1185.7,1128.7,1128.7,1142.7,1178.3,1178.3,1178.3,1192,1192,1176.7,1178.7,1160,1173.3,1182.3,1201.7,1193.3,1193.3,1193.3,1201.7,null,1196,1196,1181,1189.3,1178.3,1184.3,1184.3,1192,1201.7,1196,1178.3,1164,1154,1152.3,1162.7,1166.7,1173.7,1173.7,1182.3,1189,1189,1153.3,1164.7,1164.7,1201.7,1166,1166,1166,1201.7,null,1202,1185.7,1185.7,1167.7,1182.7,1172.3,1190.3,1180,1190.3,1180,1190.3,1184,1186.7,1175,1170.7,1180,1180,1189,1155.7,1169.3,1116.7,1094,1094,1115,1107.3,1060,1093.3,1155,1162.3,1134.7,1134.7,1148.3,1175.3,1175.3,1201.7,null,1202,1189];
const azLine = [1175,1117.3,1175.3,1176.7,1196.7,1176.7,1184,1190.7,1156.7,1125,1163.3,1215,1239,1148.7,1162.7,1203.3,1235.7,1221.7,1215.7,1228.3,1219.3,1190.3,1190.3,1159.3,1190,1220,1250.7,1222.7,1214.3,1208.3,1217.7,1216,1203.3,1216.7,1196,1211.7,1187.3,1191.7,1191.7,1208.3,1220.7,1208.3,1180,1164,1154,1151.7,1176.7,1181,1187.7,1184,1204.3,1209.3,1211.7,1166.7,1201.7,1204,1250.7,1191.7,1197.7,1200,1250,1235.7,1234,1203.3,1206,1176,1206,1184,1215,1190,1213.3,1190.7,1215,1196.7,1198.3,1175,1170.7,1206.7,1205,1223.3,1164.3,1277.3,1216.7,1193.3,1126,1148,1140,1060,1116.7,1228.3,1233.3,1174,1195,1207.3,1264.3,1221.7,1275,1266.7,1265.7,1226];

const ticks = [
    ['14:55','14.59','0.3','B',1],['14:55','14.59','0.4','B',1],['14:55','14.59','2.3','B',1],
    ['14:55','14.59','2.0','B',1],['14:55','14.59','0.7','B',1],['14:55','14.59','0.3','B',1],
    ['14:55','14.59','0.1','B',1],['14:56','14.59','0.9','B',3],['14:56','14.59','4.5','B',2],
    ['14:56','14.59','0.6','B',1],['14:56','14.59','19.0','B',4],['14:56','14.59','0.3','B',2],
    ['14:56','14.59','0.4','B',1],['14:56','14.59','0.4','B',1],['14:56','14.59','2.9','B',2],
    ['14:56','14.59','1.9','B',3],['14:56','14.59','4.8','B',1],['14:56','14.59','1.9','B',1],
    ['14:56','14.58','9.0','S',3],['14:57','14.59','1.3','B',2],['15:00','14.59','38.5','',31]
];

const candleX = i => 8.3 + 16.59 * i;
const parts = [];

function add(tag, attrs, text) {
    const attrText = Object.keys(attrs).map(k => `${k}="${attrs[k]}"`).join(' ');
    parts.push(`<${tag} ${attrText}>${text || ''}</${tag}>`);
}

function hline(x1, x2, y, stroke, width) {
    add('line', { x1, x2, y1: y, y2: y, stroke, 'stroke-width': width });
}

function vline(x, y1, y2, stroke, width) {
    add('line', { x1: x, x2: x, y1, y2, stroke, 'stroke-width': width });
}

function dotted(x2, y) {
    add('line', { x1: 0, x2, y1: y, y2: y, stroke: '#b00000', 'stroke-width': 1.5, 'stroke-dasharray': '2 3.5' });
}

function drawGrid() {
    [141, 196, 251.4, 308, 363.6, 419, 475, 530, 586, 641].forEach(y => dotted(1706, y));
    dotted(537, 697);
    dotted(1706, 1129);
    dotted(1706, 1203);
}

function drawCandles() {
    candles.forEach((c, i) => {
        const x = Math.round(candleX(i));
        const [top, bodyTop, bodyBottom, bottom, kind] = c;
        const color = { r: '#e02c2c', c: '#54ffff', w: '#e8e8e8', m: '#ff20ff' }[kind];
        vline(x, top, bottom, kind === 'm' ? '#ff90ff' : color, 2);
        const h = Math.max(bodyBottom - bodyTop, 2);
        if (kind === 'r') {
            add('rect', { x: x - 6, y: bodyTop, width: 12, height: h, fill: '#000', stroke: color, 'stroke-width': 2 });
        } else {
            add('rect', { x: x - 7, y: bodyTop, width: 14, height: h, fill: color });
            if (kind === 'm') vline(x, bodyTop, bodyBottom, '#ff90ff', 1);
        }
    });
}

function drawPolylines(lines, width) {
    lines.forEach(([stroke, points]) => {
        add('polyline', { points, fill: 'none', stroke, 'stroke-width': width, 'stroke-linejoin': 'round' });
    });
}

function drawBlocks() {
    [[281, 473, 20, 18], [811, 501, 20, 20], [910, 426, 20, 18], [1459, 228, 20, 21]].forEach(([x, y, width, height]) => {
        add('rect', { x, y, width, height, fill: '#0000f0' });
    });
    // red buy arrows
    add('path', { d: 'M223 643 L230 652 H225 V661 H221 V652 H216 Z', fill: '#f00000' });
    add('path', { d: 'M1434 368 L1441 377 H1436 V386 H1432 V377 H1427 Z', fill: '#f00000' });
}

function drawIndicatorLines() {
    // yellow spike pane
    add('polyline', { points: '8,1026 1320,1026 1335,768 1351,1026 1652,1026', fill: 'none', stroke: '#f4f400', 'stroke-width': 5 });
    hline(8, 1650, 1203, '#808080', 3);

    let segment = [];
    const flush = () => {
        if (segment.length) add('polyline', { points: segment.join(' '), fill: 'none', stroke: '#d8d800', 'stroke-width': 2 });
        segment = [];
    };
    adLine.forEach((y, i) => {
        if (y === null) flush();
        else segment.push(`${candleX(i).toFixed(1)},${y}`);
    });
    flush();
    add('polyline', {
        points: azLine.map((y, i) => `${candleX(i).toFixed(1)},${y}`).join(' '),
        fill: 'none', stroke: '#f00000', 'stroke-width': 1.5
    });
}

function axisLabel(text, y) {
    add('text', { class: 'axis-label', x: 1780, y: y + 6 }, text);
}

function drawAxes() {
    // pane separators; the main one is cut where the site has painted over the chart
    hline(0, 539, 738, RED_LINE, 2);
    hline(1706, 1787, 738, RED_LINE, 2);
    hline(0, 1787, 1030, RED_LINE, 2);
    hline(0, 1787, 1283, RED_LINE, 2);
    vline(1711, 67, 1306, RED_LINE, 2);

    // price axis
    ['18.50', '18.00', '17.50', '17.00', '16.50', '16.00', '15.50', '15.00', '14.50', '14.00', '13.50'].forEach((label, i) => {
        const y = 141 + i * 55.6;
        hline(1711, 1720, y, RED_LINE, 2);
        hline(1711, 1716, y + 27.8, RED_LINE, 2);
        axisLabel(label, y);
    });

    // signal axis
    [['1.00', 768], ['0.80', 819.5], ['0.60', 871], ['0.40', 922], ['0.20', 974]].forEach(([label, y]) => {
        hline(1711, 1720, y, RED_LINE, 2);
        hline(1711, 1716, y + 26, RED_LINE, 2);
        axisLabel(label, y);
    });
    add('rect', { x: 1712, y: 900, width: 75, height: 20, fill: '#0a0a8c' });
    add('text', { class: 'axis-box-text', x: 1716, y: 916 }, '0.39');

    // AD axis
    [['20000', 1055], ['15000', 1092.7], ['10000', 1129], ['5000', 1166], ['0', 1202.7]].forEach(([label, y]) => {
        hline(1711, 1720, y, RED_LINE, 2);
        axisLabel(label, y);
    });
    hline(1711, 1716, 1240, RED_LINE, 2);
    vline(1748, 1262, 1283, RED_LINE, 2);
    add('text', { class: 'axis-x10', x: 1714, y: 1278 }, 'X10');

    // date axis marks
    [371, 753, 1069, 1334].forEach(x => vline(x, 1283, 1306, RED_LINE, 2));
    [466, 563, 657, 833, 911, 1135, 1202, 1268, 1430, 1530, 1620].forEach(x => vline(x, 1283, 1288, RED_LINE, 2));
    vline(920, 1283, 1306, RED_LINE, 1);
    vline(1037, 1283, 1306, RED_LINE, 1);
}

function drawChart() {
    drawGrid();
    drawPolylines(thinLines, 2);
    drawPolylines(maSegments, 6);
    drawCandles();
    drawBlocks();
    // painted over area under the main chart
    add('rect', { x: 539, y: 644, width: 1167, height: 93, fill: '#000' });
    drawIndicatorLines();
    drawAxes();
    document.getElementById('chart-shapes').innerHTML = parts.join('');
}

function renderTicks() {
    const rows = ticks.map(([time, price, vol, side, count]) => {
        const priceClass = price === '14.58' ? 'green' : 'tick-price';
        const sideClass = side === 'S' ? 'tick-sell' : 'tick-buy';
        return `<div class="tick"><span class="tick-time">${time}</span><b class="${priceClass}">${price}</b>` +
            `<b class="tick-vol">${vol}<u>万</u></b><b class="tick-side ${sideClass}">${side}</b><b class="tick-count">${count}</b></div>`;
    });
    document.getElementById('ticks').innerHTML = rows.join('');
}

drawChart();
renderTicks();
```
